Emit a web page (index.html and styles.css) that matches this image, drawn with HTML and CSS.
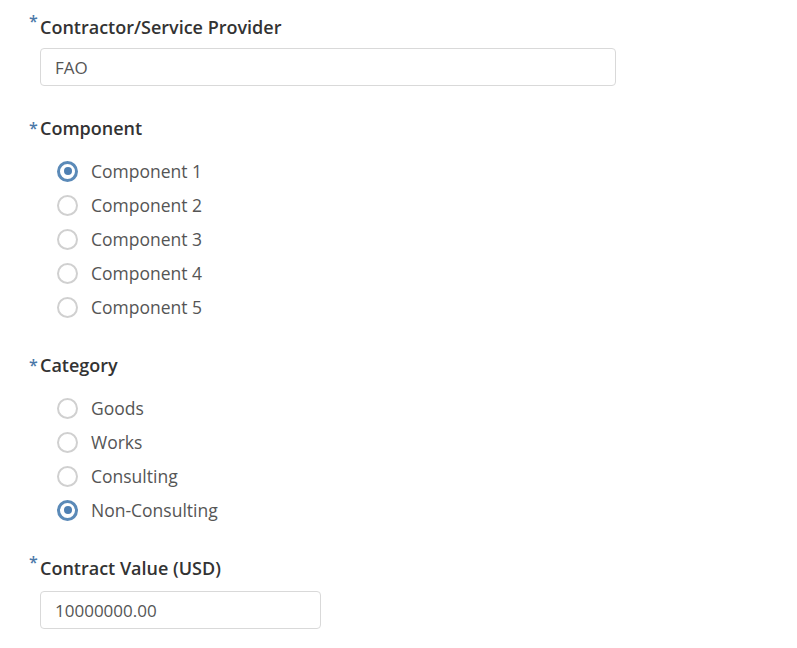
FILE: index.html
```html
<!DOCTYPE html>
<html>
<head>
<meta charset="utf-8">
<link rel="stylesheet" href="styles.css">
</head>
<body>
<form class="form">
  <div class="field">
    <label class="label"><span class="req req-sup">*</span>Contractor/Service Provider</label>
    <div class="input wide">FAO</div>
  </div>
  <div class="field">
    <label class="label"><span class="req">*</span>Component</label>
    <div class="options options-first">
      <div class="option"><span class="radio checked"></span>Component 1</div>
      <div class="option"><span class="radio"></span>Component 2</div>
      <div class="option"><span class="radio"></span>Component 3</div>
      <div class="option"><span class="radio"></span>Component 4</div>
      <div class="option"><span class="radio"></span>Component 5</div>
    </div>
  </div>
  <div class="field">
    <label class="label"><span class="req">*</span>Category</label>
    <div class="options options-second">
      <div class="option"><span class="radio"></span>Goods</div>
      <div class="option"><span class="radio"></span>Works</div>
      <div class="option"><span class="radio"></span>Consulting</div>
      <div class="option"><span class="radio checked"></span>Non-Consulting</div>
    </div>
  </div>
  <div class="field">
    <label class="label"><span class="req req-sup">*</span>Contract Value (USD)</label>
    <div class="input narrow">10000000.00</div>
  </div>
</form>
</body>
</html>
```

FILE: styles.css
```css
html, body {
  margin: 0;
  padding: 0;
  background: #fff;
}
body {
  font-family: "Open Sans", "Liberation Sans", sans-serif;
  color: #333;
}
.form {
  padding: 13px 0 0 28px;
  display: flex;
  flex-direction: column;
}
.field {
  display: flex;
  flex-direction: column;
}
.label {
  display: block;
  font-size: 18px;
  font-weight: 600;
  color: #333;
  height: 24px;
  line-height: 24px;
  white-space: nowrap;
}
.req {
  display: inline-block;
  width: 11px;
  margin-left: 1px;
  color: #4a78a8;
  font-size: 16px;
  font-weight: 600;
  line-height: 1;
  vertical-align: 1px;
}
.req-sup {
  vertical-align: 7px;
}
.input {
  box-sizing: border-box;
  margin: 11px 0 0 12px;
  height: 38px;
  border: 1px solid #d9d9d9;
  border-radius: 4px;
  padding: 0 14px;
  font-size: 17px;
  color: #555;
  display: flex;
  align-items: center;
}
.wide { width: 576px; margin-bottom: 30px; }
.narrow { width: 281px; margin-top: 13px; }
.options {
  display: flex;
  flex-direction: column;
  margin-left: 29px;
}
.options-first { margin-top: 14px; margin-bottom: 29px; }
.options-second { margin-top: 14px; margin-bottom: 27px; }
.option {
  display: flex;
  align-items: center;
  height: 34px;
  font-size: 17.5px;
  color: #555;
}
.radio {
  box-sizing: border-box;
  width: 21px;
  height: 21px;
  border-radius: 50%;
  border: 2px solid #d0d0d0;
  margin-right: 13px;
  position: relative;
}
.radio.checked {
  border: 3px solid #5b8ab8;
}
.radio.checked::after {
  content: "";
  position: absolute;
  left: 50%;
  top: 50%;
  width: 8px;
  height: 8px;
  margin: -4px 0 0 -4px;
  border-radius: 50%;
  background: #4f80b3;
}
```
